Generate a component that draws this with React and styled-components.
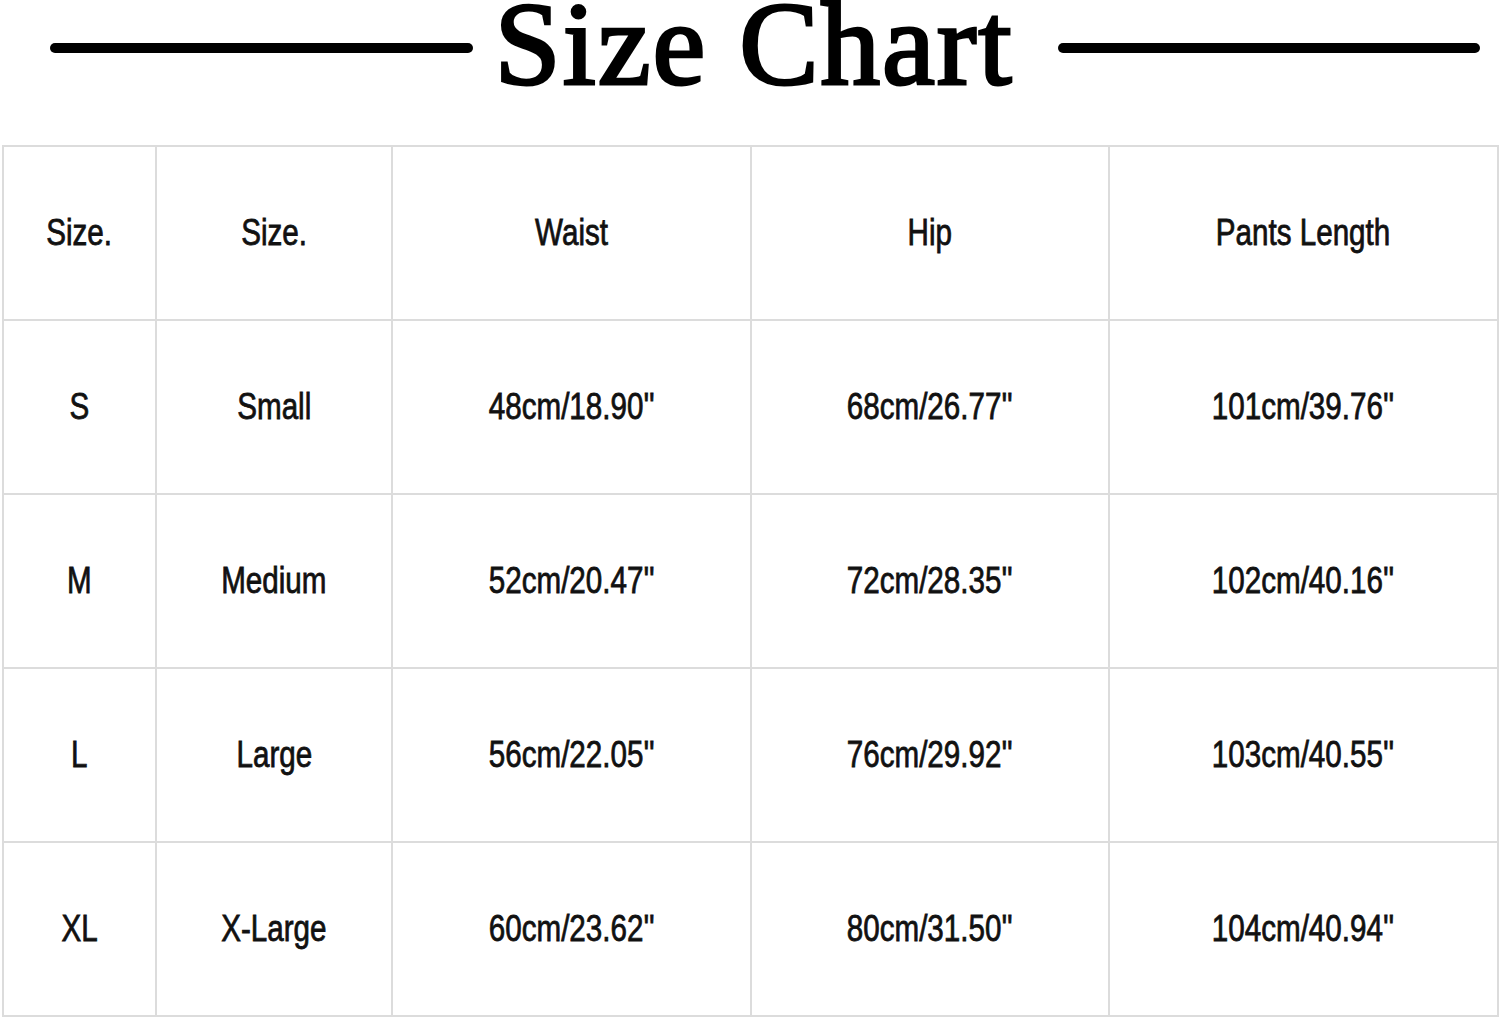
import React from 'react';
import styled, {createGlobalStyle} from 'styled-components';

const GlobalStyle = createGlobalStyle`
  html, body {
    margin: 0;
    padding: 0;
    background: #fff;
  }
`;

const Page = styled.div`
  width: 1500px;
  height: 1020px;
  background: #fff;
  overflow: hidden;
`;

const Header = styled.header`
  height: 145px;
  display: flex;
  align-items: flex-start;
  padding: 0 20px 0 50px;
`;

const Rule = styled.div`
  height: 10px;
  margin-top: 43px;
  background: #000;
  border-radius: 5px;
  flex: 1;
`;

const Title = styled.h1`
  margin: 0 ${p => p.right}px 0 ${p => p.left}px;
  font-family: 'Liberation Serif', 'Times New Roman', serif;
  font-weight: normal;
  font-size: 119px;
  letter-spacing: 2px;
  line-height: 88px;
  color: #000;
  -webkit-text-stroke: 3px #000;
  white-space: nowrap;
`;

const Table = styled.div`
  margin-left: 2px;
  display: grid;
  grid-template-columns: 153px 236px 359px 358px 389px;
  grid-auto-rows: 174px;
  border-top: 2px solid #dcdcdc;
  border-left: 2px solid #dcdcdc;
  width: max-content;
`;

const Cell = styled.div`
  display: flex;
  align-items: center;
  justify-content: center;
  border-right: 2px solid #dcdcdc;
  border-bottom: 2px solid #dcdcdc;
`;

const Label = styled.span`
  display: inline-block;
  font-family: 'Liberation Sans', Arial, sans-serif;
  font-size: 37px;
  color: #111;
  -webkit-text-stroke: 0.8px #111;
  white-space: nowrap;
  transform: scaleX(0.8);
`;

const headers = ['Size.', 'Size.', 'Waist', 'Hip', 'Pants Length'];

const rows = [
  ['S', 'Small', '48cm/18.90\'\'', '68cm/26.77\'\'', '101cm/39.76\'\''],
  ['M', 'Medium', '52cm/20.47\'\'', '72cm/28.35\'\'', '102cm/40.16\'\''],
  ['L', 'Large', '56cm/22.05\'\'', '76cm/29.92\'\'', '103cm/40.55\'\''],
  ['XL', 'X-Large', '60cm/23.62\'\'', '80cm/31.50\'\'', '104cm/40.94\'\''],
];

export default function App() {
  return (
    <Page>
      <GlobalStyle />
      <Header>
        <Rule />
        <Title left={22} right={44}>Size Chart</Title>
        <Rule />
      </Header>
      <Table>
        {headers.map((h, i) => (
          <Cell key={'h' + i}>
            <Label>{h}</Label>
          </Cell>
        ))}
        {rows.map((row, r) =>
          row.map((v, c) => (
            <Cell key={r + '-' + c}>
              <Label>{v}</Label>
            </Cell>
          ))
        )}
      </Table>
    </Page>
  );
}
